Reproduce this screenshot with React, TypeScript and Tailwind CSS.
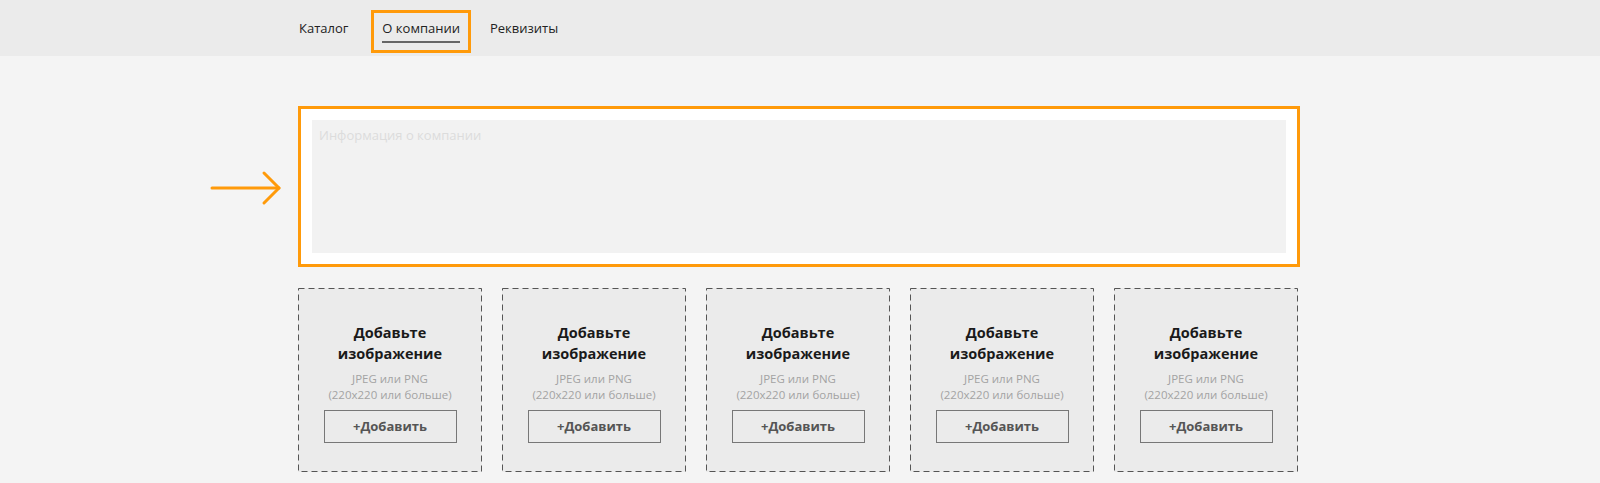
const font = { fontFamily: '"Open Sans", "Noto Sans", Arial, sans-serif' };

function NavItem({ label, active = false }: { label: string; active?: boolean }) {
  if (active) {
    return (
      <div className="flex h-[43px] flex-col items-start border-[3px] border-[#ff9a0a] px-[8px] pt-[6px]">
        <span className="text-[13px] leading-[18px] text-[#222]">{label}</span>
        <span className="mt-[4px] h-[2px] w-full bg-[#666]" />
      </div>
    );
  }
  return <span className="mt-[9px] text-[13px] leading-[18px] text-[#222]">{label}</span>;
}

function DashedFrame() {
  return (
    <svg className="pointer-events-none absolute inset-0" width="184" height="184">
      <rect x="0.5" y="0.5" width="183" height="183" fill="none" stroke="#555" strokeWidth="1" strokeDasharray="6 4" />
    </svg>
  );
}

function UploadCard() {
  return (
    <div className="relative flex h-[184px] w-[184px] flex-col items-center bg-[#ebebeb] pt-[34px]">
      <DashedFrame />
      <div className="text-center text-[14.5px] font-bold leading-[21px] text-[#1a1a1a]">
        Добавьте
        <br />
        изображение
      </div>
      <div className="mt-[7px] text-center text-[11.5px] leading-[16px] text-[#a3a3a3]">
        JPEG или PNG
        <br />
        (220x220 или больше)
      </div>
      <button className="mt-[7px] h-[33px] w-[133px] border border-[#777] bg-[#ebebeb] text-[13px] font-bold text-[#555]">
        +Добавить
      </button>
    </div>
  );
}

export default function App() {
  return (
    <div className="relative min-h-[483px] w-full bg-[#f4f4f4]" style={font}>
      {/* Top nav */}
      <header className="h-[56px] bg-[#ebebeb]">
        <nav className="ml-[299px] flex h-full items-start pt-[10px]">
          <NavItem label="Каталог" />
          <div className="ml-[23px]">
            <NavItem label="О компании" active />
          </div>
          <div className="ml-[19px] flex">
            <NavItem label="Реквизиты" />
          </div>
        </nav>
      </header>

      {/* Arrow pointing at the text field */}
      <svg className="absolute left-[210px] top-[169px]" width="74" height="38" viewBox="0 0 74 38">
        <path d="M2 19 H69" stroke="#ff9a0a" strokeWidth="3" strokeLinecap="round" fill="none" />
        <path d="M54 4 L69 19 L54 34" stroke="#ff9a0a" strokeWidth="3" strokeLinecap="round" strokeLinejoin="round" fill="none" />
      </svg>

      <main className="ml-[298px] w-[1002px] pt-[50px]">
        <div className="h-[161px] border-[3px] border-[#ff9a0a] bg-white p-[11px]">
          <textarea
            className="block h-full w-full resize-none bg-[#f2f2f2] px-[7px] py-[6px] text-[13px] text-[#222] outline-none placeholder:text-[#dcdcdc]"
            placeholder="Информация о компании"
          />
        </div>

        <div className="mt-[21px] flex gap-[20px]">
          <UploadCard />
          <UploadCard />
          <UploadCard />
          <UploadCard />
          <UploadCard />
        </div>
      </main>
    </div>
  );
}
